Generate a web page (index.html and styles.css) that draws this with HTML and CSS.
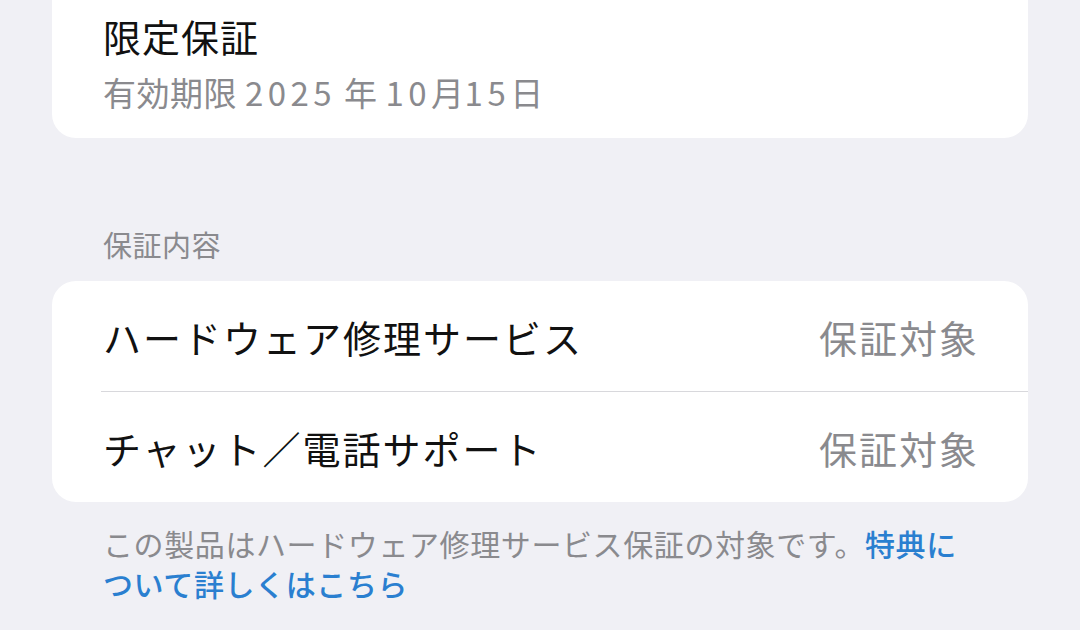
FILE: index.html
```html
<!DOCTYPE html>
<html>
	<head>
		<meta charset="utf-8">
		<title>保証</title>
		<link rel="stylesheet" href="styles.css">
	</head>
	<body>
		<div id="wrapper">
			<div class="card card_top">
				<p class="title">限定保証</p>
				<p class="sub">有効期限 <span class="num">2025</span> 年 <span class="num">10</span>月<span class="num">15</span>日</p>
			</div>

			<p class="section_head">保証内容</p>

			<div class="card">
				<div class="row">
					<span class="row_label">ハードウェア修理サービス</span>
					<span class="row_value">保証対象</span>
				</div>
				<div class="sep"></div>
				<div class="row">
					<span class="row_label">チャット／電話サポート</span>
					<span class="row_value">保証対象</span>
				</div>
			</div>

			<p class="footer">この製品はハードウェア修理サービス保証の対象です。<a class="link" href="#">特典について詳しくはこちら</a></p>
		</div>
	</body>
</html>
```

FILE: styles.css
```css
* {
	padding:0px;
	margin:0px;
	border:0px;
	box-sizing:border-box;

	font-family:"Noto Sans CJK JP", "Noto Sans", sans-serif;
	text-decoration:none;
}

body {
	background-color:#f0f0f5;
}

#wrapper {
	padding:0px 52px;
	width:1080px;
}

.card {
	background:#ffffff;
	border-radius:24px;
}
	.card_top {
		padding:13px 51px 25px 51px;
		border-radius:0px 0px 24px 24px;
	}

.title {
	font-size:38px;
	line-height:46px;
	letter-spacing:1px;
	color:#111111;
}
.sub {
	margin-top:12px;
	font-size:33px;
	line-height:42px;
	letter-spacing:0.5px;
	color:#8a8a8e;
}
	.num {
		letter-spacing:4.5px;
	}

.section_head {
	margin:88px 0px 19px 51px;
	font-size:29px;
	line-height:36px;
	letter-spacing:0.5px;
	color:#8a8a8e;
}

.row {
	display:flex;
	justify-content:space-between;
	align-items:center;

	padding:0px 49px 0px 51px;
	height:110px;

	font-size:38px;
	letter-spacing:2px;
}
	.row_label {
		color:#111111;
	}
	.row_value {
		color:#8a8a8e;
	}

.sep {
	margin-left:49px;
	height:1px;
	background:#d8d8dc;
}

.footer {
	margin:21px 51px 0px 51px;
	font-size:30px;
	line-height:40px;
	letter-spacing:0.6px;
	color:#8a8a8e;
}
	.link {
		color:#2a7fd0;
		font-weight:500;
	}
```
